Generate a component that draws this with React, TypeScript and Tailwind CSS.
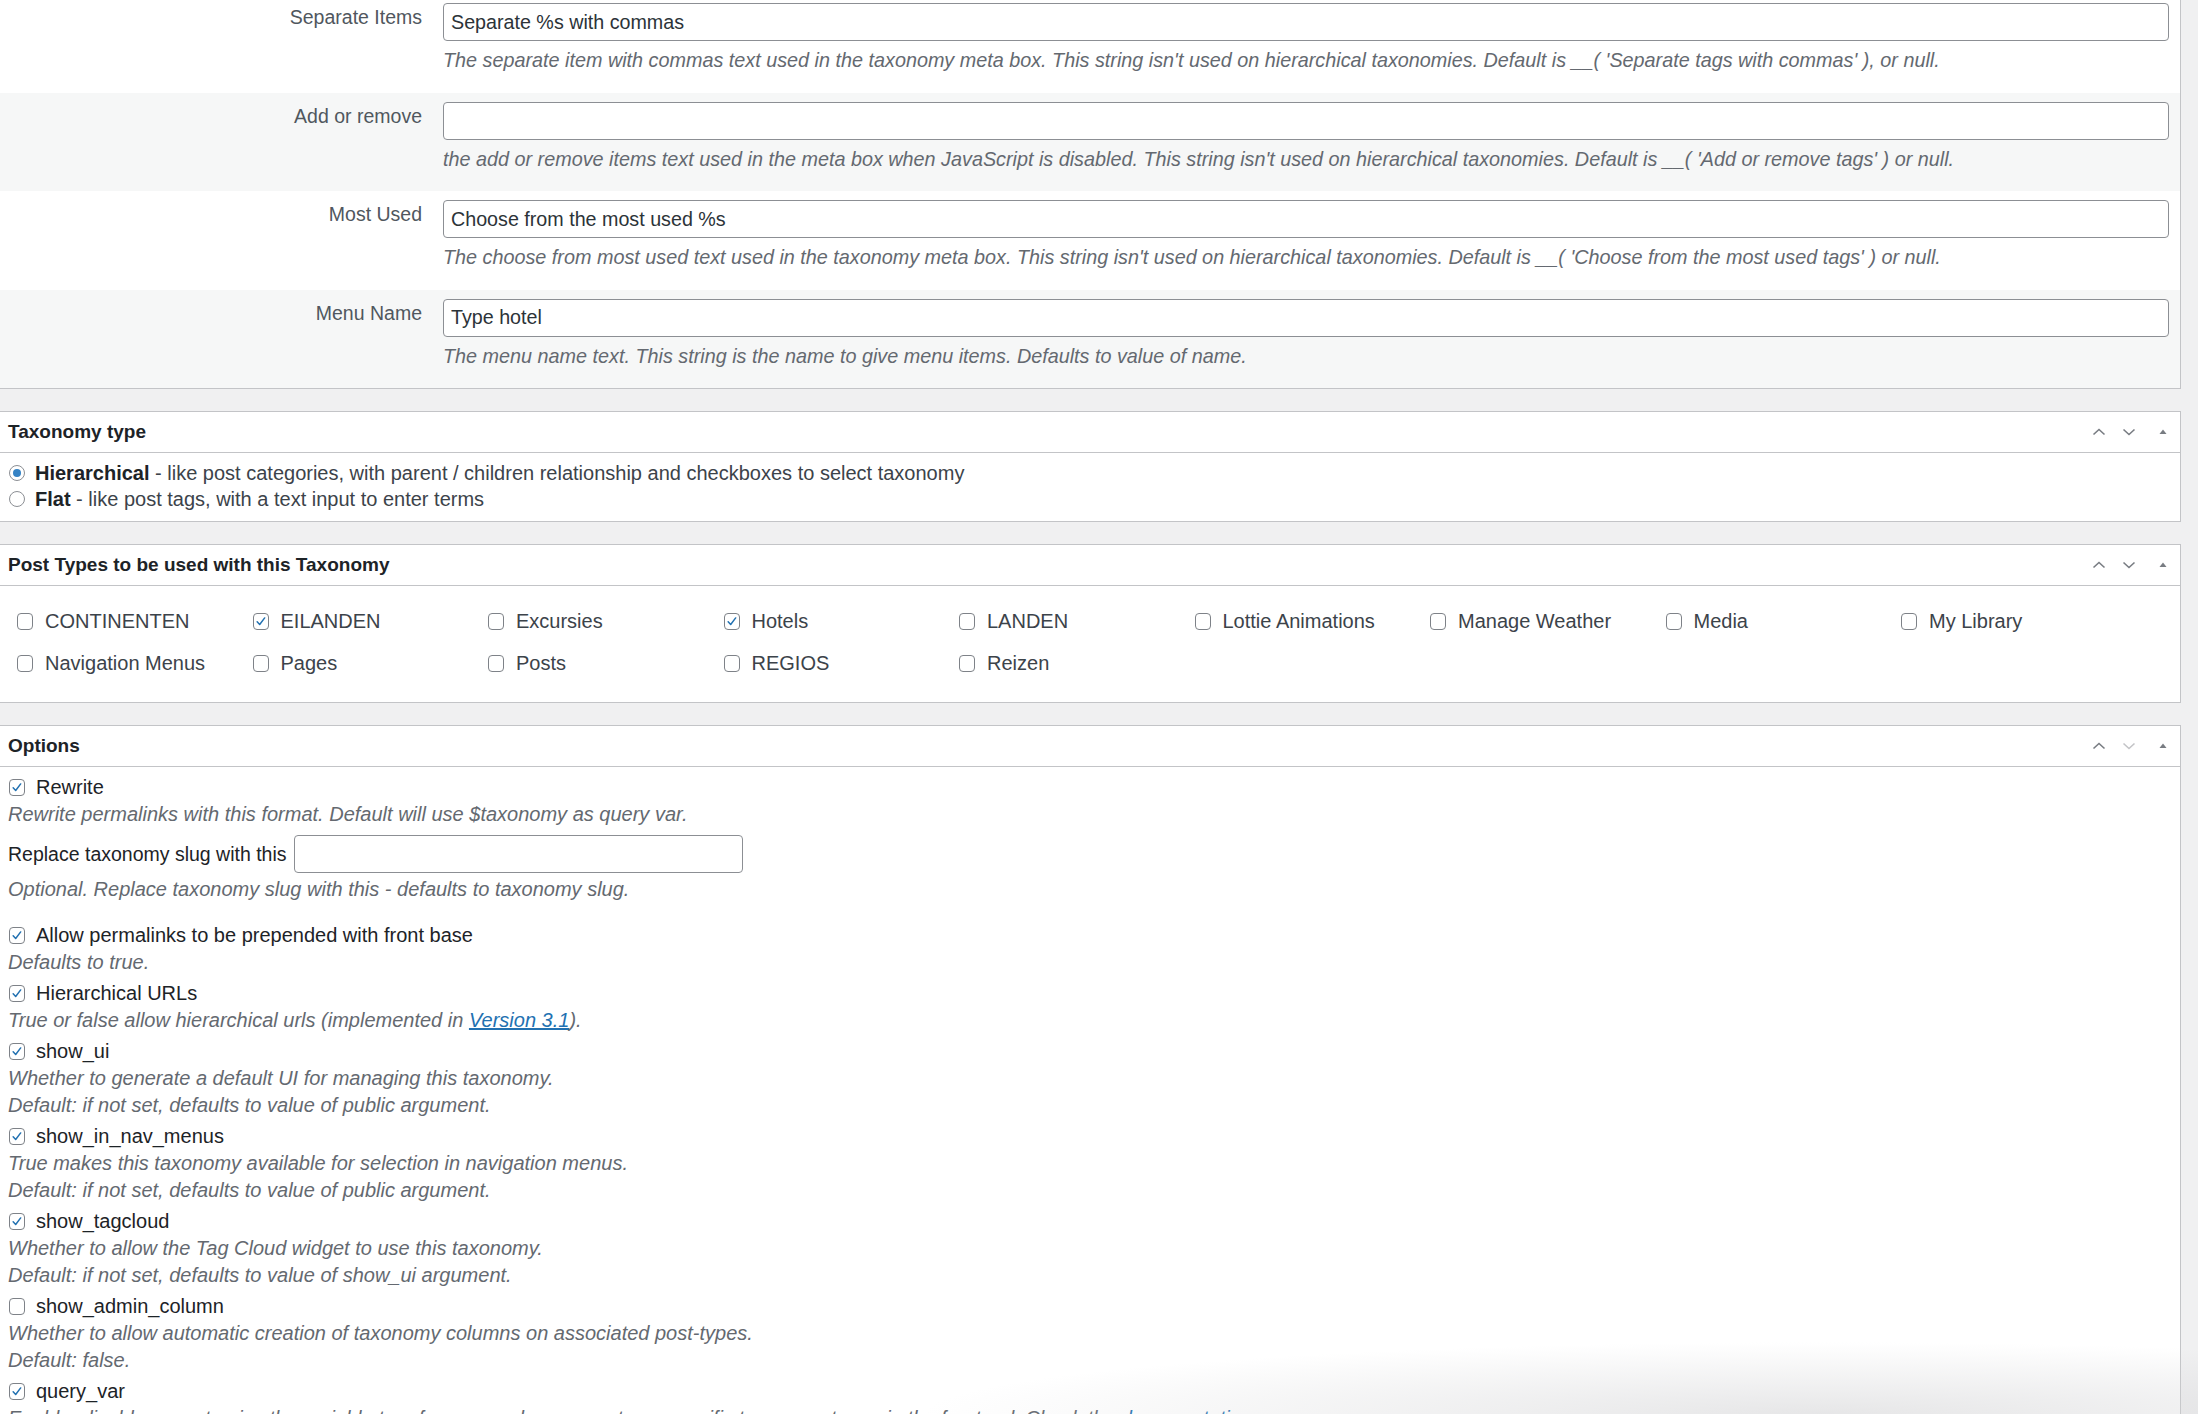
import React from 'react'

// Fields of the taxonomy "labels" box
const labelRows = [
  {
    label: 'Separate Items',
    value: 'Separate %s with commas',
    help: "The separate item with commas text used in the taxonomy meta box. This string isn't used on hierarchical taxonomies. Default is __( 'Separate tags with commas' ), or null.",
  },
  {
    label: 'Add or remove',
    value: '',
    help: "the add or remove items text used in the meta box when JavaScript is disabled. This string isn't used on hierarchical taxonomies. Default is __( 'Add or remove tags' ) or null.",
  },
  {
    label: 'Most Used',
    value: 'Choose from the most used %s',
    help: "The choose from most used text used in the taxonomy meta box. This string isn't used on hierarchical taxonomies. Default is __( 'Choose from the most used tags' ) or null.",
  },
  {
    label: 'Menu Name',
    value: 'Type hotel',
    help: 'The menu name text. This string is the name to give menu items. Defaults to value of name.',
  },
]

const postTypes = [
  { name: 'CONTINENTEN', checked: false },
  { name: 'EILANDEN', checked: true },
  { name: 'Excursies', checked: false },
  { name: 'Hotels', checked: true },
  { name: 'LANDEN', checked: false },
  { name: 'Lottie Animations', checked: false },
  { name: 'Manage Weather', checked: false },
  { name: 'Media', checked: false },
  { name: 'My Library', checked: false },
  { name: 'Navigation Menus', checked: false },
  { name: 'Pages', checked: false },
  { name: 'Posts', checked: false },
  { name: 'REGIOS', checked: false },
  { name: 'Reizen', checked: false },
]

function Checkbox({ checked }: { checked?: boolean }) {
  return (
    <span className="flex h-[17px] w-[16px] shrink-0 items-center justify-center rounded-[4px] border border-[#7e8288] bg-white">
      {checked && (
        <svg viewBox="0 0 16 16" className="h-[15px] w-[15px]">
          <path d="M3.6 8.4l2.9 3.1 5.7-7.6" fill="none" stroke="#2271b1" strokeWidth="1.7" strokeLinecap="round" strokeLinejoin="round" />
        </svg>
      )}
    </span>
  )
}

function Radio({ checked }: { checked?: boolean }) {
  return (
    <span className="flex h-[16px] w-[16px] shrink-0 items-center justify-center rounded-full border border-[#8c8f94] bg-white">
      {checked && <span className="h-[8px] w-[8px] rounded-full bg-[#3582c4]" />}
    </span>
  )
}

function BoxHeader({ title, lastBox }: { title: string; lastBox?: boolean }) {
  return (
    <div className="flex h-[41px] items-center justify-between border-b border-[#c3c4c7] pl-[8px]">
      <h2 className="-mt-[2px] text-[19px] font-bold text-[#1d2327]">{title}</h2>
      <div className="flex items-center pr-[2px]">
        <button className="flex h-[30px] w-[30px] items-center justify-center">
          <svg viewBox="0 0 16 16" className="h-[16px] w-[16px]">
            <path d="M2.5 10.5L8 5.5l5.5 5" fill="none" stroke="#787c82" strokeWidth="1.6" />
          </svg>
        </button>
        <button className="flex h-[30px] w-[30px] items-center justify-center">
          <svg viewBox="0 0 16 16" className="h-[16px] w-[16px]">
            <path d="M2.5 5.5L8 10.5l5.5-5" fill="none" stroke={lastBox ? '#c3c4c7' : '#787c82'} strokeWidth="1.6" />
          </svg>
        </button>
        <button className="ml-[4px] flex h-[30px] w-[30px] items-center justify-center">
          <svg viewBox="0 0 16 16" className="h-[16px] w-[16px]">
            <path d="M4.5 10L8 5.5l3.5 4.5z" fill="#787c82" />
          </svg>
        </button>
      </div>
    </div>
  )
}

function OptionCheck({ label, checked, className = '' }: { label: string; checked?: boolean; className?: string }) {
  return (
    <label className={`flex h-[27px] items-center pl-[1px] text-[#1d2327] ${className}`}>
      <Checkbox checked={checked} />
      <span className="ml-[11px]">{label}</span>
    </label>
  )
}

function Help({ children }: { children: React.ReactNode }) {
  return <p className="h-[27px] italic text-[#646970]">{children}</p>
}

export default function App() {
  return (
    <div className="relative h-[1414px] w-[2198px] overflow-hidden bg-[#f0f0f1] font-['Liberation_Sans',Arial,sans-serif] text-[20px] leading-[27px]">
      <div className="-mt-[6px] w-[2181px]">
        {/* Labels table */}
        <div className="border-r border-b border-[#c3c4c7] bg-white">
          {labelRows.map((row, i) => (
            <div key={row.label} className={`flex h-[98.5px] pt-[9px] ${i % 2 === 1 ? 'bg-[#f6f7f7]' : 'bg-white'}`}>
              <div className="w-[422px] pt-[1px] text-right text-[19.5px] text-[#50575e]">{row.label}</div>
              <div className="ml-[21px] flex-1 pr-[11px]">
                <input
                  type="text"
                  defaultValue={row.value}
                  className="h-[38px] w-full rounded-[4px] border border-[#8c8f94] bg-white px-[7px] text-[19.7px] text-[#2c3338] outline-none"
                />
                <p className="mt-[6px] text-[19.8px] italic text-[#646970]">{row.help}</p>
              </div>
            </div>
          ))}
        </div>

        {/* Taxonomy type */}
        <div className="mt-[22px] border-y border-r border-[#c3c4c7] bg-white">
          <BoxHeader title="Taxonomy type" />
          <div className="pt-[7px] pb-[9px] pl-[9px] text-[#3c434a]">
            <label className="flex h-[26px] items-center">
              <Radio checked />
              <span className="ml-[10px]">
                <strong className="text-[#1d2327]">Hierarchical</strong> - like post categories, with parent / children relationship and checkboxes to select taxonomy
              </span>
            </label>
            <label className="flex h-[26px] items-center">
              <Radio />
              <span className="ml-[10px]">
                <strong className="text-[#1d2327]">Flat</strong> - like post tags, with a text input to enter terms
              </span>
            </label>
          </div>
        </div>

        {/* Post types */}
        <div className="mt-[22px] border-y border-r border-[#c3c4c7] bg-white">
          <BoxHeader title="Post Types to be used with this Taxonomy" />
          <div className="grid grid-cols-[repeat(9,235.5px)] gap-y-[15px] pt-[22px] pb-[25px] pl-[17px] text-[#3c434a]">
            {postTypes.map((pt) => (
              <label key={pt.name} className="flex h-[27px] items-center">
                <Checkbox checked={pt.checked} />
                <span className="ml-[12px]">{pt.name}</span>
              </label>
            ))}
          </div>
        </div>

        {/* Options */}
        <div className="mt-[22px] border-y border-r border-[#c3c4c7] bg-white">
          <BoxHeader title="Options" lastBox />
          <div className="pt-[7px] pl-[8px] pb-[40px]">
            <OptionCheck label="Rewrite" checked />
            <Help>Rewrite permalinks with this format. Default will use $taxonomy as query var.</Help>
            <div className="mt-[7px] flex h-[38px] items-center text-[19.5px] text-[#1d2327]">
              <span>Replace taxonomy slug with this</span>
              <input type="text" className="ml-[7px] h-[38px] w-[449px] rounded-[4px] border border-[#8c8f94] bg-white px-[7px] outline-none" />
            </div>
            <div className="mt-[3px]">
              <Help>Optional. Replace taxonomy slug with this - defaults to taxonomy slug.</Help>
            </div>

            <OptionCheck label="Allow permalinks to be prepended with front base" checked className="mt-[19px]" />
            <Help>Defaults to true.</Help>

            <OptionCheck label="Hierarchical URLs" checked className="mt-[4px]" />
            <Help>
              True or false allow hierarchical urls (implemented in{' '}
              <a href="#" className="text-[#2271b1] underline">Version 3.1</a>).
            </Help>

            <OptionCheck label="show_ui" checked className="mt-[4px]" />
            <Help>Whether to generate a default UI for managing this taxonomy.</Help>
            <Help>Default: if not set, defaults to value of public argument.</Help>

            <OptionCheck label="show_in_nav_menus" checked className="mt-[4px]" />
            <Help>True makes this taxonomy available for selection in navigation menus.</Help>
            <Help>Default: if not set, defaults to value of public argument.</Help>

            <OptionCheck label="show_tagcloud" checked className="mt-[4px]" />
            <Help>Whether to allow the Tag Cloud widget to use this taxonomy.</Help>
            <Help>Default: if not set, defaults to value of show_ui argument.</Help>

            <OptionCheck label="show_admin_column" className="mt-[4px]" />
            <Help>Whether to allow automatic creation of taxonomy columns on associated post-types.</Help>
            <Help>Default: false.</Help>

            <OptionCheck label="query_var" checked className="mt-[4px]" />
            <Help>
              Enable, disable or customize the variable to reference and query posts on specific taxonomy terms in the frontend. Check the{' '}
              <a href="#" className="text-[#2271b1] underline">documentation</a>.
            </Help>
          </div>
        </div>
      </div>

      {/* soft shade cast over the lower edge */}
      <div className="pointer-events-none absolute right-0 bottom-0 h-[90px] w-[1500px] bg-[radial-gradient(ellipse_75%_100%_at_75%_100%,rgba(210,210,212,0.55),rgba(255,255,255,0)_80%)]" />
    </div>
  )
}
